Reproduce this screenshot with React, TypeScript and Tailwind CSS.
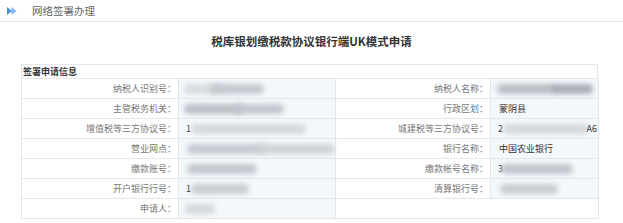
import type { ReactNode } from "react";

type Blob = { left: number; width: number; tone?: string };

function Blurred({ blobs, lead, tail }: { blobs: Blob[]; lead?: string; tail?: string }) {
  return (
    <div className="relative h-full w-full">
      {lead && <span className="absolute left-[7px] top-[3px] text-[9px] text-[#333]">{lead}</span>}
      {blobs.map((b, i) => (
        <div
          key={i}
          className={`absolute top-[5px] h-[10px] rounded-full blur-[2.5px] ${b.tone ?? "bg-[#c9ccd2]"}`}
          style={{ left: b.left, width: b.width }}
        />
      ))}
      {tail && <span className="absolute right-[1px] top-[3px] text-[9px] text-[#333]">{tail}</span>}
    </div>
  );
}

function Label({ children }: { children?: ReactNode }) {
  return (
    <div className="flex items-center justify-end border-b border-r border-[#e6e6e6] bg-white pr-[2px] text-[9px] text-[#777]">
      {children}
    </div>
  );
}

function Value({ children }: { children?: ReactNode }) {
  return (
    <div className="flex items-center border-b border-r border-[#e6e6e6] bg-[#f3f8fd] text-[9px] text-[#333]">
      {children}
    </div>
  );
}

function Text({ children }: { children: ReactNode }) {
  return <span className="pl-[8px]">{children}</span>;
}

export default function App() {
  return (
    <div
      className="h-[223px] w-[623px] overflow-hidden bg-white"
      style={{ fontFamily: '"Microsoft YaHei", "Noto Sans CJK SC", "Noto Sans", sans-serif' }}
    >
      <div className="flex h-[22px] items-center border-b border-[#e6e6e6]">
        <svg width="10" height="8" viewBox="0 0 10 8" className="ml-[7px]">
          <polygon points="0,0 5,4 0,8" fill="#4a8fe0" />
          <polygon points="4.5,0 9.5,4 4.5,8" fill="#7fb2ee" />
        </svg>
        <span className="ml-[15px] text-[10.5px] text-[#666]">网络签署办理</span>
      </div>

      <div className="flex h-[42px] items-center justify-center pb-[3px]">
        <span className="text-[11.5px] font-bold text-[#333]">税库银划缴税款协议银行端UK模式申请</span>
      </div>

      <div className="ml-[21px] w-[577px] border-l border-t border-[#e6e6e6]">
        <div className="flex h-[14px] items-center border-b border-r border-[#e6e6e6] pl-[1px] text-[9px] font-semibold text-[#333]">
          签署申请信息
        </div>
        <div className="grid auto-rows-[20px] grid-cols-[157px_157px_155px_108px]">
          <Label>纳税人识别号：</Label>
          <Value>
            <Blurred
              blobs={[
                { left: 5, width: 40, tone: "bg-[#d9dce1]" },
                { left: 30, width: 55, tone: "bg-[#c6c9cf]" },
              ]}
            />
          </Value>
          <Label>纳税人名称：</Label>
          <Value>
            <Blurred
              blobs={[
                { left: 6, width: 60, tone: "bg-[#bcbfc5]" },
                { left: 60, width: 42, tone: "bg-[#abaeb5]" },
              ]}
            />
          </Value>

          <Label>主管税务机关：</Label>
          <Value>
            <Blurred
              blobs={[
                { left: 5, width: 60, tone: "bg-[#bcbfc5]" },
                { left: 55, width: 50, tone: "bg-[#c4c7cd]" },
              ]}
            />
          </Value>
          <Label>行政区划：</Label>
          <Value>
            <Text>蒙阴县</Text>
          </Value>

          <Label>增值税等三方协议号：</Label>
          <Value>
            <Blurred lead="1" blobs={[{ left: 12, width: 115, tone: "bg-[#d5d8dd]" }]} />
          </Value>
          <Label>城建税等三方协议号：</Label>
          <Value>
            <Blurred lead="2" tail="A6" blobs={[{ left: 12, width: 85, tone: "bg-[#d5d8dd]" }]} />
          </Value>

          <Label>营业网点：</Label>
          <Value>
            <Blurred
              blobs={[
                { left: 8, width: 80, tone: "bg-[#c6c9cf]" },
                { left: 80, width: 76, tone: "bg-[#d0d3d8]" },
              ]}
            />
          </Value>
          <Label>银行名称：</Label>
          <Value>
            <Text>中国农业银行</Text>
          </Value>

          <Label>缴款账号：</Label>
          <Value>
            <Blurred blobs={[{ left: 8, width: 70, tone: "bg-[#c4c7cd]" }]} />
          </Value>
          <Label>缴款帐号名称：</Label>
          <Value>
            <Blurred lead="3" blobs={[{ left: 10, width: 72, tone: "bg-[#c2c5cb]" }]} />
          </Value>

          <Label>开户银行行号：</Label>
          <Value>
            <Blurred lead="1" blobs={[{ left: 12, width: 58, tone: "bg-[#c9ccd1]" }]} />
          </Value>
          <Label>清算银行号：</Label>
          <Value>
            <Blurred blobs={[{ left: 9, width: 58, tone: "bg-[#c9ccd1]" }]} />
          </Value>

          <Label>申请人：</Label>
          <Value>
            <Blurred blobs={[{ left: 6, width: 30, tone: "bg-[#d5d8dd]" }]} />
          </Value>
          <div className="col-span-2 border-b border-r border-[#e6e6e6] bg-white" />
        </div>
      </div>
    </div>
  );
}
